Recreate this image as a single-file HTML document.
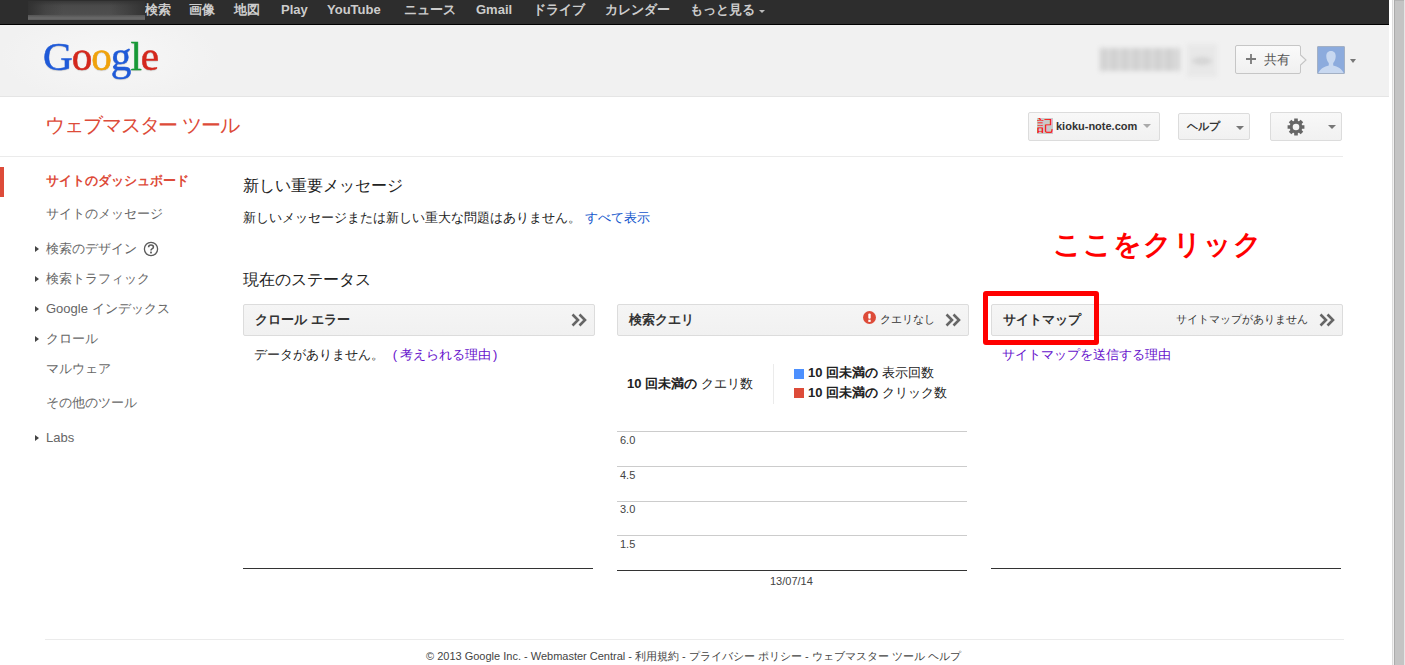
<!DOCTYPE html>
<html><head><meta charset="utf-8">
<style>
*{margin:0;padding:0;box-sizing:border-box}
html,body{width:1405px;height:665px;overflow:hidden;background:#fff}
body{font-family:"Liberation Sans",sans-serif;font-size:13px;color:#222;position:relative}
.a{position:absolute;white-space:nowrap}
#bar{position:absolute;left:0;top:0;width:1389px;height:25px;background:#2d2d2d;border-bottom:1px solid #000}
#bar .n{position:absolute;top:2px;color:#ccc;font-weight:bold;font-size:13px;line-height:16px}
#blurname{position:absolute;z-index:2;left:28px;top:1px;width:117px;height:19px;background:linear-gradient(90deg,rgba(48,48,48,.95) 0,rgba(48,48,48,.3) 15%,rgba(48,48,48,0) 30%,rgba(48,48,48,0) 70%,rgba(48,48,48,.4) 85%,rgba(48,48,48,.9) 100%) 0 0/100% 14px no-repeat,linear-gradient(180deg,#383838 0,#4a4a4a 25%,#4e4e4e 70%,#5a5a5a 78%,#6a6a6a 90%,#5c5c5c 100%)}
#hdr{position:absolute;left:0;top:25px;width:1389px;height:72px;background:radial-gradient(ellipse 110px 45px at 110px 32px,#f7f7f7,#f1f1f1);border-bottom:1px solid #e5e5e5}
#scroll{position:absolute;left:1389px;top:0;width:16px;height:665px;background:linear-gradient(90deg,#fff 0,#fff 3px,#dcdcdc 3px,#dcdcdc 4px,#f2f2f2 4px,#f2f2f2 5px,#ababab 5px,#ababab 6px,#c4c4c4 6px,#c4c4c4 15px,#e6e6e6 15px)}
#thumb{position:absolute;left:1395px;top:0;width:9px;height:1px;background:#b4b4b4}
.logo{position:absolute;left:43px;top:34px;font-family:"Liberation Serif",serif;font-size:40px;line-height:46px;letter-spacing:-1px;-webkit-text-stroke:.5px;text-shadow:0 1px 1px rgba(0,0,0,.18);transform:scaleX(1.03);transform-origin:0 0}
#title{position:absolute;left:45px;top:112px;font-size:20px;color:#dd4b39;line-height:26px;letter-spacing:-1.1px}
#tline{position:absolute;left:0;top:156px;width:1343px;height:1px;background:#ebebeb}
.btn{position:absolute;background:linear-gradient(#f8f8f8,#f1f1f1);border:1px solid #dcdcdc;border-radius:2px}
.caret{position:absolute;width:0;height:0;border-left:4px solid transparent;border-right:4px solid transparent;border-top:4px solid #777}
.nav{position:absolute;left:46px;font-size:13px;color:#666;line-height:16px}
.tri{position:absolute;left:35px;width:0;height:0;border-top:3.5px solid transparent;border-bottom:3.5px solid transparent;border-left:4px solid #444}
.h2{position:absolute;font-size:16px;color:#222;line-height:20px}
.ph{position:absolute;top:304px;height:32px;background:linear-gradient(#f5f5f5,#f1f1f1);border:1px solid #dcdcdc;border-radius:2px}
.ph .t{position:absolute;left:11px;top:7px;font-weight:bold;color:#333;font-size:13px;line-height:16px}
.dbl{position:absolute;top:10px}
.base{position:absolute;top:568px;height:1px;background:#333}
.gl{position:absolute;left:617px;width:350px;height:1px;background:#ccc}
.gv{position:absolute;left:620px;font-size:11px;color:#444;line-height:12px}
</style></head><body>
<div id="bar">
  <div id="blurname"></div>
  <span class="n" style="left:145px">検索</span>
  <span class="n" style="left:189px">画像</span>
  <span class="n" style="left:234px">地図</span>
  <span class="n" style="left:281px">Play</span>
  <span class="n" style="left:327px">YouTube</span>
  <span class="n" style="left:404px">ニュース</span>
  <span class="n" style="left:476px">Gmail</span>
  <span class="n" style="left:533px">ドライブ</span>
  <span class="n" style="left:605px">カレンダー</span>
  <span class="n" style="left:690px">もっと見る</span>
  <div class="caret" style="left:759px;top:10px;border-width:3px;border-top-color:#bbb"></div>
</div>
<div id="hdr"></div>
<div class="logo"><span style="color:#1f5ad8">G</span><span style="color:#d4281d">o</span><span style="color:#f0a20b">o</span><span style="color:#1f5ad8">g</span><span style="color:#179936">l</span><span style="color:#d4281d">e</span></div>


<div style="position:absolute;left:1100px;top:48px;width:80px;height:23px;background:repeating-linear-gradient(90deg,#d0d0d0 0 6px,#dadada 6px 11px);filter:blur(2.5px)"></div>
<div style="position:absolute;left:1187px;top:44px;width:30px;height:33px;background:#e8e8e8;filter:blur(2px)"></div><div style="position:absolute;left:1192px;top:57px;width:20px;height:8px;background:#d5d5d5;border-radius:50%;filter:blur(2px)"></div>
<div class="btn" style="left:1235px;top:45px;width:66px;height:29px;background:linear-gradient(#fafafa,#f0f0f0);border-color:#c6c6c6"></div>
<svg style="position:absolute;left:1299.5px;top:53.5px" width="9" height="12"><path d="M0 0.5 L6 6 L0 11.5" fill="#f4f4f4" stroke="#c4c4c4" stroke-width="1.1"/></svg>
<svg style="position:absolute;left:1246px;top:54px" width="10" height="10"><path d="M0 5H10M5 0V10" stroke="#7a7a7a" stroke-width="1.8"/></svg>
<span class="a" style="left:1264px;top:52px;font-size:13px;line-height:16px;color:#555">共有</span>
<div style="position:absolute;left:1317px;top:46px;width:28px;height:28px;background:#8cabdd;border:1px solid #a3b0c4;border-radius:1px;overflow:hidden">
 <svg width="28" height="28" style="position:absolute;left:-1px;top:-1px"><path d="M14 5 C10.5 5 9.2 7.5 9.3 10.5 C9.4 13.5 10.8 16 11.8 17 L11.8 19.5 C7 20.8 2.5 23 1 28 L27 28 C25.5 23 21 20.8 16.2 19.5 L16.2 17 C17.2 16 18.6 13.5 18.7 10.5 C18.8 7.5 17.5 5 14 5Z" fill="#c8d8f0"/></svg>
</div>
<div class="caret" style="left:1350px;top:59px;border-width:4px 3.5px 0 3.5px;border-top-color:#777"></div>
<div id="scroll"></div>
<div id="thumb"></div>

<div id="title">ウェブマスター ツール</div>
<div id="tline"></div>

<div class="btn" style="left:1028px;top:112px;width:132px;height:29px"></div>
<div class="btn" style="left:1178px;top:113px;width:72px;height:27px"></div>
<div class="btn" style="left:1270px;top:112px;width:72px;height:29px"></div>


<div style="position:absolute;left:0;top:167px;width:4px;height:30px;background:#dd4b39"></div>
<div class="nav" style="top:173px;color:#dd4b39;font-weight:bold">サイトのダッシュボード</div>
<div class="nav" style="top:206px">サイトのメッセージ</div>
<div class="tri" style="top:246px"></div><div class="nav" style="top:241px">検索のデザイン</div>
<svg style="position:absolute;left:143px;top:241px" width="16" height="16"><circle cx="8" cy="8" r="6.6" fill="none" stroke="#5a5a5a" stroke-width="1.3"/><path d="M5.6 6.2 Q5.6 4 8 4 Q10.4 4 10.4 6 Q10.4 7.2 9 7.9 Q8 8.4 8 9.6" fill="none" stroke="#5a5a5a" stroke-width="1.6"/><rect x="7.1" y="10.6" width="1.8" height="1.8" fill="#5a5a5a"/></svg>
<div class="tri" style="top:276px"></div><div class="nav" style="top:271px">検索トラフィック</div>
<div class="tri" style="top:306px"></div><div class="nav" style="top:301px">Google インデックス</div>
<div class="tri" style="top:336px"></div><div class="nav" style="top:331px">クロール</div>
<div class="nav" style="top:361px">マルウェア</div>
<div class="nav" style="top:395px">その他のツール</div>
<div class="tri" style="top:435px"></div><div class="nav" style="top:430px">Labs</div>

<div class="h2" style="left:243px;top:175.5px">新しい重要メッセージ</div>
<div class="a" style="left:243px;top:210px;font-size:13px;line-height:16px;color:#222">新しいメッセージまたは新しい重大な問題はありません。 <span style="color:#15c">すべて表示</span></div>
<div class="h2" style="left:243px;top:270px">現在のステータス</div>

<div class="ph" style="left:243px;width:352px"><span class="t">クロール エラー</span><svg class="dbl" width="16" height="14" style="position:absolute;top:7.5px;left:327px"><path d="M1.5 1.5 L7 7 L1.5 12.5 M8.5 1.5 L14 7 L8.5 12.5" fill="none" stroke="#666" stroke-width="2.6"/></svg></div>
<div class="a" style="left:254px;top:347px;font-size:13px;line-height:16px;color:#222">データがありません。 <span style="color:#61c;margin-left:5px">(<span style="margin:0 2px 0 3px">考えられる理由</span>)</span></div>
<div class="base" style="left:243px;width:350px"></div>

<div class="ph" style="left:617px;width:352px"><span class="t">検索クエリ</span>
 <svg style="position:absolute;left:245px;top:6px" width="13" height="13"><circle cx="6.5" cy="6.5" r="6.5" fill="#dd4b39"/><rect x="5.3" y="2.5" width="2.4" height="5.2" rx="1" fill="#fff"/><rect x="5.3" y="8.7" width="2.4" height="2.2" fill="#fff"/></svg>
 <span class="a" style="left:262px;top:7px;font-size:11px;line-height:14px;color:#333">クエリなし</span><svg class="dbl" width="16" height="14" style="position:absolute;top:7.5px;left:327px"><path d="M1.5 1.5 L7 7 L1.5 12.5 M8.5 1.5 L14 7 L8.5 12.5" fill="none" stroke="#666" stroke-width="2.6"/></svg></div>
<div class="a" style="left:627px;top:376px;font-size:13px;line-height:16px;color:#222"><b>10 回未満の</b> クエリ数</div>
<div style="position:absolute;left:773px;top:364px;width:1px;height:40px;background:#ebebeb"></div>
<div style="position:absolute;left:794px;top:369px;width:10px;height:10px;background:#4d90fe"></div>
<div style="position:absolute;left:794px;top:388px;width:10px;height:10px;background:#dd4b39"></div>
<div class="a" style="left:808px;top:365px;font-size:13px;line-height:16px;color:#222"><b>10 回未満の</b> 表示回数</div>
<div class="a" style="left:808px;top:385px;font-size:13px;line-height:16px;color:#222"><b>10 回未満の</b> クリック数</div>
<div class="gl" style="top:431px"></div>
<div class="gl" style="top:466px"></div>
<div class="gl" style="top:501px"></div>
<div class="gl" style="top:535px"></div>
<div class="gv" style="top:434px">6.0</div>
<div class="gv" style="top:469px">4.5</div>
<div class="gv" style="top:503px">3.0</div>
<div class="gv" style="top:538px">1.5</div>
<div class="base" style="left:617px;top:570px;width:350px"></div>
<div class="a" style="left:770px;top:575px;font-size:11px;line-height:12px;color:#444">13/07/14</div>

<div class="ph" style="left:991px;width:352px"><span class="t">サイトマップ</span>
 <span class="a" style="left:184px;top:7px;font-size:11px;line-height:14px;color:#333">サイトマップがありません</span><svg class="dbl" width="16" height="14" style="position:absolute;top:7.5px;left:327px"><path d="M1.5 1.5 L7 7 L1.5 12.5 M8.5 1.5 L14 7 L8.5 12.5" fill="none" stroke="#666" stroke-width="2.6"/></svg></div>
<div class="a" style="left:1002px;top:347px;font-size:13px;line-height:16px;color:#61c">サイトマップを送信する理由</div>
<div class="base" style="left:991px;width:350px"></div>

<div style="position:absolute;left:983px;top:291px;width:116px;height:54px;border:5px solid #f00;border-radius:3px"></div>
<div class="a" style="left:1053px;top:228px;font-size:28px;line-height:34px;color:#f00;letter-spacing:1px;font-weight:bold">ここをクリック</div>

<div style="position:absolute;left:45px;top:639px;width:1299px;height:1px;background:#ebebeb"></div>
<div class="a" style="left:426px;top:649px;font-size:11px;line-height:14px;color:#444">© 2013 Google Inc. - Webmaster Central - 利用規約 - プライバシー ポリシー - ウェブマスター ツール ヘルプ</div>

<span class="a" style="left:1037px;top:118px;width:16px;height:16px;background:#c9c9c9;color:#f00;font-size:16px;line-height:16px;text-align:center;overflow:hidden">記</span>
<span class="a" style="left:1056px;top:119px;font-size:11px;line-height:14px;font-weight:bold;color:#333">kioku-note.com</span>
<div class="caret" style="left:1143px;top:124px;border-top-color:#aaa"></div>
<span class="a" style="left:1187px;top:119px;font-size:11px;line-height:14px;font-weight:bold;color:#333">ヘルプ</span>
<div class="caret" style="left:1236px;top:126px"></div>
<svg style="position:absolute;left:1287px;top:117.5px" width="18" height="18" viewBox="0 0 18 18"><path fill="#666" fill-rule="evenodd" d="M7.13 2.88 L7.21 0.59 L10.79 0.59 L10.87 2.88 L12.00 3.35 L13.68 1.79 L16.21 4.32 L14.65 6.00 L15.12 7.13 L17.41 7.21 L17.41 10.79 L15.12 10.87 L14.65 12.00 L16.21 13.68 L13.68 16.21 L12.00 14.65 L10.87 15.12 L10.79 17.41 L7.21 17.41 L7.13 15.12 L6.00 14.65 L4.32 16.21 L1.79 13.68 L3.35 12.00 L2.88 10.87 L0.59 10.79 L0.59 7.21 L2.88 7.13 L3.35 6.00 L1.79 4.32 L4.32 1.79 L6.00 3.35Z M5.70 9.00 a3.30 3.30 0 1 0 6.60 0 a3.30 3.30 0 1 0 -6.60 0Z"/></svg>
<div class="caret" style="left:1328px;top:125px"></div>
</body></html>
